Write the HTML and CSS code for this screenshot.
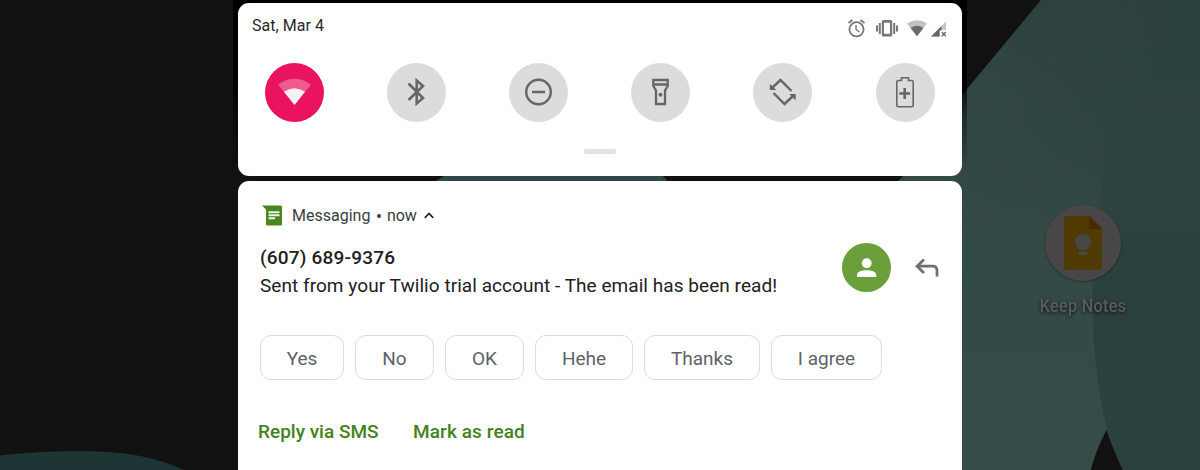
FILE: index.html
```
<!DOCTYPE html>
<html lang="en">
<head>
<meta charset="utf-8">
<title>Notifications</title>
<link rel="stylesheet" href="styles.css">
</head>
<body>
<div class="screen">
  <svg class="wallpaper" width="1200" height="470" viewBox="0 0 1200 470">
    <defs>
      <linearGradient id="leaf" x1="0" y1="0" x2="0" y2="1">
        <stop offset="0" stop-color="#2d4240"/>
        <stop offset=".2" stop-color="#324846"/>
        <stop offset="1" stop-color="#364c49"/>
      </linearGradient>
      <linearGradient id="shadeRight" x1="1020" y1="0" x2="1160" y2="60" gradientUnits="userSpaceOnUse">
        <stop offset="0" stop-color="#2b413f" stop-opacity="0"/>
        <stop offset="1" stop-color="#2b413f"/>
      </linearGradient>
      <linearGradient id="fold" x1="0" y1="90" x2="0" y2="240" gradientUnits="userSpaceOnUse">
        <stop offset="0" stop-color="#2b413f" stop-opacity="0"/>
        <stop offset="1" stop-color="#2b413f"/>
      </linearGradient>
      <linearGradient id="fadeDown" x1="0" y1="60" x2="0" y2="230" gradientUnits="userSpaceOnUse">
        <stop offset="0" stop-color="#fff"/>
        <stop offset="1" stop-color="#000"/>
      </linearGradient>
      <mask id="topOnly"><rect width="1200" height="470" fill="url(#fadeDown)"/></mask>
    </defs>
    <rect width="1200" height="470" fill="#111"/>
    <path d="M0 455.500C35 451 85 450 115 452.500C143 455 164 461 184 470H0Z" fill="#1d3535"/>
    <path d="M430 184L446 175H662L670 184Z" fill="#324846"/>
    <path d="M1041 0L962 95V120L895 184V470H1200V0Z" fill="url(#leaf)"/>
    <path d="M1041 0H1200V240H962V95Z" fill="url(#shadeRight)" mask="url(#topOnly)"/>
    <path d="M1106 90C1106 150 1103 180 1101 195C1087 285 1091 360 1107 430L1122 470H1200V90Z" fill="url(#fold)"/>
    <path d="M1090.500 471C1095 455 1100 442 1106.500 430C1111 443 1116 455 1123 471Z" fill="#111"/>
  </svg>

  <div class="launcher">
    <svg class="keep" width="78" height="78" viewBox="0 0 78 78">
      <circle cx="39" cy="39" r="38" fill="#484646"/>
      <path d="M22.500 12H45.500L58 24.500V63.500Q58 66 55.500 66H22.500Q20 66 20 63.500V14.500Q20 12 22.500 12Z" fill="#4f3b02"/>
      <path d="M45.500 12L58 24.500V25H45.500Z" fill="#492b02"/>
      <circle cx="39" cy="38" r="8" fill="#484646"/>
      <rect x="35" y="39" width="8" height="6" fill="#484646"/>
      <rect x="34.500" y="47.500" width="9" height="3.500" rx=".5" fill="#484646"/>
    </svg>
    <div class="launcher-label">Keep Notes</div>
  </div>

  <main class="shade">
    <section class="panel">
      <header class="status">
        <span class="date">Sat, Mar 4</span>
        <svg class="status-icons" width="100" height="20" viewBox="0 0 100 20">
          <g fill="none" stroke="#777" stroke-width="1.800">
            <circle cx="9.500" cy="11.300" r="7.100"/>
            <path d="M9 7V11.500L12.500 14" stroke-width="1.400"/>
            <path d="M1.500 5L5.500 2M13.500 2L17.500 5"/>
          </g>
          <g fill="#777">
            <path d="M36.500 2H43.500Q45.200 2 45.200 3.500V17Q45.200 18.500 43.500 18.500H36.500Q34.800 18.500 34.800 17V3.500Q34.800 2 36.500 2ZM37 4.700V15.800H43V4.700Z" fill-rule="evenodd"/>
            <path d="M31.800 5H33.800V16H31.800ZM29 7.500H31V13.500H29ZM46.200 5H48.200V16H46.200ZM49 7.500H51V13.500H49Z"/>
          </g>
          <path d="M70 18.200L60 5.500Q70-1 80 5.500Z" fill="#c2c2c2"/>
          <path d="M70 18.200L63.600 10Q70 5.600 76.400 10Z" fill="#6c6c6c"/>
          <path d="M84 18.500L99 3.500V12H93V18.500Z" fill="#c4c4c4"/>
          <path d="M84 18.500L94.500 8V12.500H92.500V18.500Z" fill="#666"/>
          <path d="M94.800 14L98.800 18.200M98.800 14L94.800 18.200" stroke="#666" stroke-width="1.300"/>
        </svg>
      </header>
      <div class="tiles">
        <div class="tile tile-on">
          <svg width="59" height="59" viewBox="0 0 59 59">
            <path d="M29.500 42L13 21.500Q29.500 10 46 21.500Z" fill="#ef5a8f"/>
            <path d="M29.500 42L19 28.800Q29.500 21.800 40 28.800Z" fill="#f5f2f3"/>
          </svg>
        </div>
        <div class="tile">
          <svg width="59" height="59" viewBox="0 0 59 59">
            <path d="M21.500 20.500L36 35L29.700 40.500V17.500L36 23L21.500 37" fill="none" stroke="#666" stroke-width="2.600"/>
          </svg>
        </div>
        <div class="tile">
          <svg width="59" height="59" viewBox="0 0 59 59">
            <circle cx="29.500" cy="29" r="12.300" fill="none" stroke="#666" stroke-width="2.400"/>
            <path d="M23 29H36" stroke="#666" stroke-width="2.500"/>
          </svg>
        </div>
        <div class="tile">
          <svg width="59" height="59" viewBox="0 0 59 59">
            <path d="M22.300 17H36.700V23L34 27.500V41H25V27.500L22.300 23ZM22 21.500H37" fill="none" stroke="#666" stroke-width="2.300"/>
            <circle cx="29.500" cy="31.700" r="2" fill="#666"/>
          </svg>
        </div>
        <div class="tile">
          <svg width="59" height="59" viewBox="0 0 59 59">
            <path d="M19.500 24.500L27.500 17L38.500 28M39.500 33.500L31.500 41L20.500 30" fill="none" stroke="#666" stroke-width="2.400"/>
            <path d="M16.800 20.700L23.300 27H16.800ZM42.700 37.500L36.200 31H42.700Z" fill="#666"/>
          </svg>
        </div>
        <div class="tile">
          <svg width="59" height="59" viewBox="0 0 59 59">
            <path d="M25.500 17.500V14.700H32.500V17.500H35.500Q37.200 17.500 37.200 19.200V42Q37.200 43.700 35.500 43.700H22.500Q20.800 43.700 20.800 42V19.200Q20.800 17.500 22.500 17.500Z" fill="none" stroke="#666" stroke-width="1.600"/>
            <path d="M23.300 30.500H34.200M28.700 25V36" stroke="#666" stroke-width="2.600"/>
          </svg>
        </div>
      </div>
      <div class="handle"></div>
    </section>

    <section class="note">
      <header class="note-head">
        <svg class="app-icon" width="22" height="22" viewBox="0 0 22 22">
          <path d="M0 .500H18.500Q20 .500 20 2V19Q20 20.500 18.500 20.500H5.500Q4 20.500 4 19V4.500Z" fill="#4a851e"/>
          <path d="M6.500 7.300H17.500M6.500 10.300H17.500M6.500 13.300H13" stroke="#eef5e8" stroke-width="2"/>
        </svg>
        <span class="app-name">Messaging</span>
        <span class="dot"></span>
        <span class="when">now</span>
        <svg class="caret" width="10" height="7" viewBox="0 0 10 7"><path d="M.8 5.800L5 1.500L9.200 5.800" fill="none" stroke="#222" stroke-width="1.700"/></svg>
      </header>
      <div class="note-body">
        <div class="message">
          <div class="sender">(607) 689-9376</div>
          <div class="text">Sent from your Twilio trial account - The email has been read!</div>
        </div>
        <svg class="avatar" width="49" height="49" viewBox="0 0 49 49">
          <circle cx="24.500" cy="24.500" r="24.500" fill="#6a9f3a"/>
          <circle cx="24.700" cy="20.200" r="4.900" fill="#fff"/>
          <path d="M15 34V32C15 28.700 20 27.300 24.600 27.300S34.200 28.700 34.200 32V34Z" fill="#fff"/>
        </svg>
        <svg class="reply" width="24" height="20" viewBox="0 0 24 20">
          <path d="M9 1.500L2 8.200L9 14.900M2 8.200H17.500Q22 8.200 22 12.500V18.500" fill="none" stroke="#707070" stroke-width="2.700"/>
        </svg>
      </div>
      <div class="chips">
        <span class="chip chip-yes">Yes</span>
        <span class="chip chip-no">No</span>
        <span class="chip chip-ok">OK</span>
        <span class="chip chip-hehe">Hehe</span>
        <span class="chip chip-thanks">Thanks</span>
        <span class="chip chip-agree">I agree</span>
      </div>
      <div class="actions">
        <span class="action-reply">Reply via SMS</span>
        <span class="action-read">Mark as read</span>
      </div>
    </section>
  </main>
</div>
</body>
</html>
```
FILE: styles.css
```
* { box-sizing: border-box; }
body { margin: 0; background: #111; font-family: Roboto, sans-serif; }
svg { display: block; flex: none; }
.screen { position: relative; width: 1200px; height: 470px; overflow: hidden; display: flex; justify-content: center; }
.wallpaper { position: absolute; left: 0; top: 0; }

.launcher { position: absolute; left: 1023px; top: 204px; width: 120px; display: flex; flex-direction: column; align-items: center; }
.keep { margin-left: -1px; filter: drop-shadow(0 1px 1px rgba(0, 0, 0, .35)); }
.launcher-label { margin-top: 13px; font-size: 19px; line-height: 21px; letter-spacing: .4px; font-weight: 500; color: #5b5d5c; white-space: nowrap; transform: scaleX(.85); text-shadow: 0 1px 4px rgba(0, 0, 0, .8); }

.shade { position: relative; width: 734px; height: 470px; padding: 3px 5px 0; display: flex; flex-direction: column; gap: 5px; background: linear-gradient(#000 0, #000 70px, rgba(0, 0, 0, .45) 110px, rgba(0, 0, 0, 0) 172px); }
.panel { height: 173px; flex: none; background: #fff; border-radius: 11px; padding: 14px 16px 0 14px; }
.status { display: flex; justify-content: space-between; height: 46px; color: #27292b; }
.date { font-size: 16px; line-height: 18px; letter-spacing: .05px; }
.status-icons { margin: 1px -1px 0 0; }
.tiles { display: flex; gap: 63px; padding-left: 13px; }
.tile { width: 59px; height: 59px; flex: none; border-radius: 50%; background: #dcdcdc; }
.tile:last-child { margin-left: 1px; }
.tile-on { background: #e91360; }
.handle { width: 32px; height: 5px; border-radius: 3px; background: #e2e2e2; margin: 27px auto 0; transform: translateX(1px); }

.note { height: 300px; flex: none; background: #fff; border-radius: 11px 11px 0 0; padding: 23px 23px 0 22px; }
.note-head { display: flex; align-items: center; height: 23px; padding-left: 2px; font-size: 16px; color: #3a3c3e; }
.app-name { margin-left: 8px; }
.dot { width: 4px; height: 4px; margin: 1px 6px 0 6.500px; border-radius: 50%; background: #3a3c3e; }
.caret { margin-left: 7.500px; }
.note-body { display: flex; height: 60px; margin-top: 16px; color: #212121; }
.message { width: 582px; flex: none; white-space: nowrap; }
.sender { margin-top: 1px; font-size: 19px; line-height: 28px; letter-spacing: .2px; font-weight: 500; }
.text { font-size: 19px; line-height: 28px; letter-spacing: .05px; }
.reply { margin: 15px 0 0 24px; }
.chips { display: flex; gap: 11px; margin-top: 32px; }
.chip { height: 45px; border: 1px solid #dadce0; border-radius: 11px; display: flex; align-items: center; justify-content: center; font-size: 19px; color: #5f6368; white-space: nowrap; padding-top: 1px; }
.chip-yes { width: 84px; }
.chip-no { width: 79px; }
.chip-ok { width: 79px; }
.chip-hehe { width: 98px; }
.chip-thanks { width: 116px; }
.chip-agree { width: 111px; }
.actions { display: flex; gap: 34.500px; margin: 38px 0 0 -2px; font-size: 19px; line-height: 28px; font-weight: 500; color: #43821b; white-space: nowrap; }
.action-read { letter-spacing: .1px; }
```
